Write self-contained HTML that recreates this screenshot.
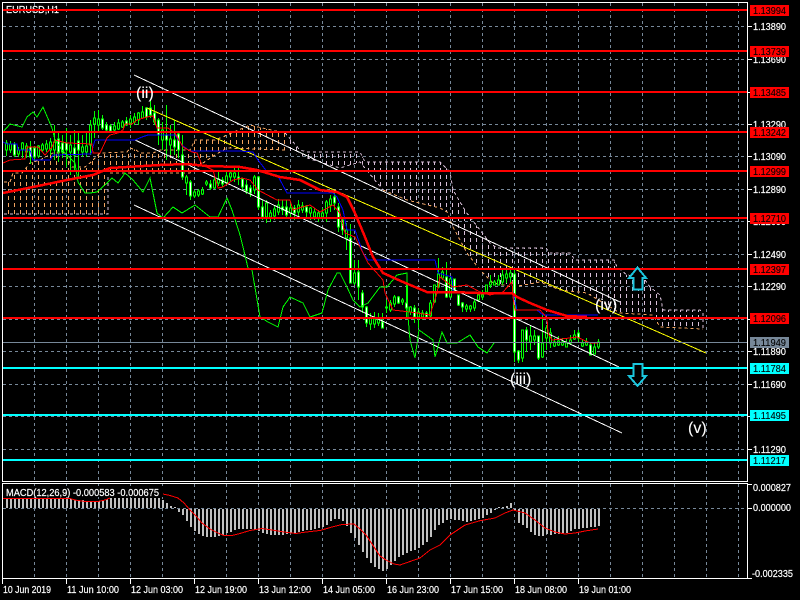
<!DOCTYPE html>
<html><head><meta charset="utf-8"><title>EURUSD,H1</title>
<style>
html,body{margin:0;padding:0;background:#000;width:800px;height:600px;overflow:hidden}
svg{display:block}
text{font-family:"Liberation Sans",sans-serif;font-size:10.5px;fill:#fff;stroke:#fff;stroke-width:.2}
.big{font-size:16px;stroke-width:.1}
.k{fill:#000;stroke:#000;stroke-width:.1}
</style></head><body>
<svg width="800" height="600" viewBox="0 0 800 600" xmlns="http://www.w3.org/2000/svg">
<defs>
<pattern id="o" width="6" height="7" patternUnits="userSpaceOnUse" x="2" y="0"><rect width="1" height="4" fill="#F4A460"/></pattern>
<pattern id="t" width="6" height="7" patternUnits="userSpaceOnUse" x="2" y="0"><rect width="1" height="4" fill="#D8BFD8"/></pattern>
</defs>
<rect width="800" height="600" fill="#000"/>
<g shape-rendering="crispEdges" fill="none">
<!-- grid -->
<path stroke="#778899" stroke-dasharray="3 3" d="M34.5 3V481M66.5 3V481M98.5 3V481M130.5 3V481M162.5 3V481M194.5 3V481M226.5 3V481M258.5 3V481M290.5 3V481M322.5 3V481M354.5 3V481M386.5 3V481M418.5 3V481M450.5 3V481M482.5 3V481M514.5 3V481M546.5 3V481M578.5 3V481M610.5 3V481M642.5 3V481M674.5 3V481M706.5 3V481M738.5 3V481
M3 26.5H747M3 59.5H747M3 92.5H747M3 124.5H747M3 156.5H747M3 189.5H747M3 221.5H747M3 254.5H747M3 286.5H747M3 319.5H747M3 351.5H747M3 384.5H747M3 416.5H747M3 449.5H747
M34.5 484V578M66.5 484V578M98.5 484V578M130.5 484V578M162.5 484V578M194.5 484V578M226.5 484V578M258.5 484V578M290.5 484V578M322.5 484V578M354.5 484V578M386.5 484V578M418.5 484V578M450.5 484V578M482.5 484V578M514.5 484V578M546.5 484V578M578.5 484V578M610.5 484V578M642.5 484V578M674.5 484V578M706.5 484V578M738.5 484V578M3 508.5H747"/>
<!-- cloud -->
<path fill="url(#o)" d="M4 182L10 182 13 173 22 173 30 163 40 160 53 153 65 153 72 167 85 167 90 163 100 153 127 152 130 148 136 150 140 153 153 153 160 150 190 150 195 140 215 140 227 135 250 125 258 127 285 133 300 153 285 150 258 150 227 148 215 155 200 165 190 172 110 173 108 214 4 214z"/>
<path fill="url(#t)" d="M285 133L300 150 307 152 360 152 365 162 440 162 450 172 453 190 466 212 480 230 490 243 497 248 546 248 550 253 570 253 575 260 614 260 617 267 627 275 643 277 650 287 660 295 663 310 700 310 703 313 703 329 660 327 653 315 620 313 587 293 560 290 540 282 513 287 493 283 480 270 467 253 453 227 447 212 440 208 407 200 383 190 360 162 340 168 307 158 285 150z"/>
<path stroke="#F4A460" stroke-dasharray="3 3" d="M4 182L10 182 13 173 22 173 30 163 40 160 53 153 65 153 72 167 85 167 90 163 100 153 127 152 130 148 136 150 140 153 153 153 160 150 190 150 195 140 215 140 227 135 250 125 258 127 285 133M110 173H190L200 165 215 155 227 148 285 150M383 190L407 200 440 208 447 212 453 227 467 253 480 270 493 283 513 287 540 282 560 290 587 293 620 313 653 315 660 327 703 329"/>
<path stroke="#D8BFD8" stroke-dasharray="3 3" d="M4 214H108V175M285 133L300 150 307 152 360 152 365 162 440 162 450 172 453 190 466 212 480 230 490 243 497 248 546 248 550 253 570 253 575 260 614 260 617 267 627 275 643 277 650 287 660 295 663 310 700 310 703 313V329M307 158L340 168 360 162 383 190"/>
<!-- wicks -->
<path stroke="#00FF00" d="M6.5 140V156M10.5 141V153M14.5 142V157M18.5 147V157M22.5 142V158M26.5 143V158M30.5 141V164M34.5 146V160M38.5 145V158M42.5 143V152M46.5 140V152M50.5 138V155M54.5 125V160M58.5 133V162M62.5 135V158M66.5 128V167M70.5 135V175M74.5 130V172M78.5 133V178M82.5 135V157M86.5 133V157M90.5 120V155M94.5 111V138M98.5 110V132M102.5 115V130M106.5 122V132M110.5 124V132M114.5 122V131M118.5 119V130M122.5 120V128M126.5 117V126M130.5 115V128M134.5 113V125M138.5 112V125M142.5 106V118M146.5 107V120M150.5 100V118M154.5 105V125M158.5 118V145M162.5 122V150M166.5 105V160M170.5 125V155M174.5 120V155M178.5 133V158M182.5 135V180M186.5 175V195M190.5 180V200M194.5 190V198M198.5 189V197M202.5 187V195M206.5 180V186M210.5 180V190M214.5 177V189M218.5 172V186M222.5 177V187M226.5 172V185M230.5 172V181M234.5 168V182M238.5 168V185M242.5 178V190M246.5 180V194M250.5 185V197M254.5 175V194M258.5 176V210M262.5 200V220M266.5 200V223M270.5 210V222M274.5 205V220M278.5 199V215M282.5 200V215M286.5 200V218M290.5 203V218M294.5 205V220M298.5 200V217M302.5 202V213M306.5 205V218M310.5 207V220M314.5 208V220M318.5 210V222M322.5 208V220M326.5 200V222M330.5 195V212M334.5 193V210M338.5 203V232M342.5 218V235M346.5 223V250M350.5 224V283M354.5 260V285M358.5 260V300M362.5 290V313M366.5 306V327M370.5 313V330M374.5 312V328M378.5 313V326M382.5 313V328M386.5 300V313M390.5 300V312M394.5 295V307M398.5 296V304M402.5 298V305M406.5 282V317M410.5 306V315M414.5 305V323M418.5 308V328M422.5 310V320M426.5 311V318M430.5 300V317M434.5 285V303M438.5 258V288M442.5 267V280M446.5 262V298M450.5 277V298M454.5 279V292M458.5 295V306M462.5 302V312M466.5 304V312M470.5 305V312M474.5 300V311M478.5 293V302M482.5 290V300M486.5 285V292M490.5 275V288M494.5 280V285M498.5 275V285M502.5 270V285M506.5 268V283M510.5 268V283M514.5 268V362M518.5 350V363M522.5 330V362M526.5 327V352M530.5 326V350M534.5 330V345M538.5 336V360M542.5 315V358M546.5 325V350M550.5 328V348M554.5 338V347M558.5 336V346M562.5 338V346M566.5 338V347M570.5 335V345M574.5 330V340M578.5 330V343M582.5 340V347M586.5 338V346M590.5 342V355M594.5 342V354M598.5 339V349"/>
<!-- bull bodies -->
<path stroke="#00FF00" fill="#000" d="M5.5 143h2v7h-2zM9.5 144h2v6h-2zM17.5 150h2v4h-2zM21.5 143h2v6h-2zM25.5 146h2v6h-2zM37.5 146h2v10h-2zM41.5 145h2v5h-2zM45.5 144h2v5h-2zM49.5 142h2v8h-2zM53.5 142h2v8h-2zM69.5 145h2v7h-2zM81.5 147h2v5h-2zM85.5 146h2v6h-2zM89.5 125h2v20h-2zM93.5 118h2v6h-2zM97.5 119h2v6h-2zM113.5 126h2v4h-2zM117.5 123h2v6h-2zM121.5 122h2v5h-2zM129.5 119h2v4h-2zM133.5 117h2v5h-2zM137.5 113h2v7h-2zM141.5 112h2v6h-2zM161.5 130h2v10h-2zM169.5 139h2v6h-2zM185.5 177h2v6h-2zM193.5 192h2v4h-2zM197.5 191h2v4h-2zM201.5 190h2v4h-2zM205.5 182h2v2h-2zM213.5 180h2v8h-2zM217.5 179h2v4h-2zM225.5 176h2v7h-2zM229.5 173h2v4h-2zM233.5 173h2v4h-2zM253.5 177h2v13h-2zM265.5 203h2v14h-2zM269.5 213h2v4h-2zM273.5 209h2v7h-2zM277.5 205h2v7h-2zM289.5 208h2v5h-2zM297.5 205h2v7h-2zM301.5 206h2v4h-2zM309.5 208h2v5h-2zM313.5 212h2v5h-2zM317.5 213h2v5h-2zM321.5 213h2v4h-2zM325.5 202h2v11h-2zM329.5 199h2v6h-2zM345.5 230h2v8h-2zM353.5 273h2v10h-2zM369.5 318h2v6h-2zM373.5 319h2v5h-2zM377.5 318h2v5h-2zM385.5 307h2v1h-2zM389.5 303h2v7h-2zM393.5 297h2v7h-2zM401.5 300h2v2h-2zM409.5 307h2v5h-2zM417.5 312h2v5h-2zM421.5 313h2v4h-2zM429.5 303h2v13h-2zM433.5 285h2v17h-2zM437.5 274h2v13h-2zM441.5 272h2v6h-2zM449.5 279h2v18h-2zM465.5 306h2v3h-2zM469.5 306h2v3h-2zM473.5 302h2v6h-2zM477.5 295h2v5h-2zM481.5 295h2v2h-2zM485.5 285h2v7h-2zM489.5 282h2v3h-2zM493.5 282h2v3h-2zM497.5 280h2v5h-2zM501.5 275h2v7h-2zM505.5 274h2v4h-2zM509.5 273h2v4h-2zM521.5 330h2v28h-2zM529.5 336h2v6h-2zM533.5 336h2v4h-2zM541.5 343h2v14h-2zM545.5 328h2v10h-2zM549.5 333h2v10h-2zM553.5 342h2v4h-2zM557.5 341h2v4h-2zM561.5 342h2v3h-2zM565.5 343h2v4h-2zM569.5 340h2v3h-2zM573.5 335h2v4h-2zM581.5 343h2v3h-2zM585.5 342h2v3h-2zM593.5 347h2v7h-2zM597.5 342h2v5h-2z"/>
<!-- bear bodies -->
<path stroke="#00FF00" fill="#fff" d="M13.5 144h2v11h-2zM29.5 147h2v10h-2zM33.5 148h2v9h-2zM57.5 139h2v13h-2zM61.5 143h2v9h-2zM65.5 143h2v7h-2zM73.5 148h2v7h-2zM77.5 141h2v9h-2zM101.5 119h2v9h-2zM105.5 125h2v5h-2zM109.5 126h2v5h-2zM125.5 121h2v4h-2zM145.5 108h2v9h-2zM149.5 108h2v7h-2zM153.5 113h2v9h-2zM157.5 120h2v15h-2zM165.5 135h2v5h-2zM173.5 140h2v7h-2zM177.5 134h2v16h-2zM181.5 155h2v22h-2zM189.5 182h2v14h-2zM209.5 184h2v4h-2zM221.5 180h2v4h-2zM237.5 177h2v2h-2zM241.5 179h2v8h-2zM245.5 185h2v6h-2zM249.5 188h2v5h-2zM257.5 177h2v30h-2zM261.5 207h2v10h-2zM281.5 207h2v3h-2zM285.5 207h2v8h-2zM293.5 208h2v5h-2zM305.5 207h2v5h-2zM333.5 197h2v6h-2zM337.5 207h2v20h-2zM341.5 220h2v10h-2zM349.5 238h2v45h-2zM357.5 272h2v15h-2zM361.5 293h2v14h-2zM365.5 307h2v16h-2zM381.5 322h2v6h-2zM397.5 297h2v6h-2zM405.5 303h2v5h-2zM413.5 308h2v9h-2zM425.5 313h2v4h-2zM445.5 277h2v20h-2zM453.5 279h2v11h-2zM457.5 295h2v10h-2zM461.5 303h2v4h-2zM513.5 274h2v78h-2zM517.5 351h2v9h-2zM525.5 330h2v10h-2zM537.5 336h2v22h-2zM577.5 333h2v5h-2zM589.5 345h2v10h-2z"/>
<!-- channels -->
<path stroke="#fff" d="M134 75L620 302M135 140L619 367M134 205L622 433"/>
<path stroke="#FFFF00" d="M147 108L706 353"/>
<!-- blue kijun -->
<path stroke="#0000FF" stroke-width="1" d="M3 142L7 144H17L18 150H30L33 160H50L53 155L91 154L95 140H135L142 137L148 135H175L183 146L190 151H240L253 152L258 160L268 173L278 176L287 193H333L337 197L343 210L347 230H355L363 253L368 260H435L438 273L452 277L453 293H510L513 292L517 310H537L543 315H598"/>
<!-- thin red tenkan -->
<path stroke="#FF0000" d="M3 163L10 160 25 159 27 147H38L45 155 52 147 55 140 67 143 92 144 93 153 100 153 107 138 110 135 118 133 123 130 125 124H132L137 120 147 117 153 116 157 128H168L175 133 183 147 192 152 197 153 202 165 213 170 218 188 223 187 233 180 242 178 250 180 258 190 277 200H290L293 210 302 207 310 205 320 212 333 205 340 213 345 233 355 237 360 247 368 263 383 280 385 293 393 310 410 312 430 315 437 293 440 277 453 287 467 285 480 292 490 295 503 292 512 282 513 297 515 310H540L547 318 548 333 552 340 570 338 577 337 590 343H598"/>
<!-- green chikou -->
<path stroke="#00FF00" d="M3 132L10 124 22 127 27 117 33 112 37 117 43 107 52 128 55 140 62 150 75 163 78 182 85 193H90L97 192 107 183 112 178 118 183 125 173 133 180 143 192 150 178 157 213 163 218 173 207 182 213 195 205 210 217H218L227 198 232 210 240 235 243 247 248 268 252 270 260 317 268 322 278 327 283 307 290 297 303 303 310 317 322 313 328 290 337 273H340L347 287 353 300 360 307 368 303 380 287 387 287 397 275 407 273 408 317 410 340 415 358 419 330 433 340 435 357 442 332 447 343H457L470 335 478 347 487 353 494 343"/>
<!-- thick red MA -->
<path stroke="#FF0000" stroke-width="2.5" d="M3 193L33 187 67 180 93 175 110 168 160 165 187 164 207 166 240 167 257 170 280 177 300 180 320 190 337 192 347 197 355 213 365 237 373 257 383 273 403 282 427 292H453L477 293 512 293 517 297 530 303 547 310 567 316 587 317"/>
</g>
<text x="6" y="13" textLength="53" lengthAdjust="spacingAndGlyphs">EURUSD,H1</text>
<g shape-rendering="crispEdges" fill="none">
<!-- horizontal levels -->
<path stroke="#FF0000" stroke-width="2" d="M3 10H747M3 51H747M3 92H747M3 132H747M3 171H747M3 218H747M3 269H747M3 318H747"/>
<path stroke="#00FFFF" stroke-width="2" d="M3 368H747M3 415H747M3 460H747"/>
<path stroke="#778899" d="M3 342.5H747"/>
<!-- arrows -->
<path stroke="#1BC5DC" stroke-width="2" fill="#000" d="M637.5 267.5L646 278H642.5V289.5H633.5V278H629z"/>
<path stroke="#1BC5DC" stroke-width="2" fill="#000" d="M633.5 364V376H629L637.5 386L646 376H642.5V364z"/>
<!-- MACD histogram -->
<rect x="3" y="486" width="160" height="11" fill="#000"/>
<path transform="translate(.5 0)" stroke="#C0C0C0" stroke-width="2" d="M6.5 508V499M10.5 508V499M14.5 508V499M18.5 508V499M22.5 508V499M26.5 508V499M30.5 508V499M34.5 508V499M38.5 508V499M42.5 508V498M46.5 508V498M50.5 508V498M54.5 508V499M58.5 508V499M62.5 508V499M66.5 508V499M70.5 508V499M74.5 508V500M78.5 508V500M82.5 508V500M86.5 508V501M90.5 508V501M94.5 508V501M98.5 508V501M102.5 508V500M106.5 508V499M110.5 508V498M114.5 508V498M118.5 508V498M122.5 508V498M126.5 508V498M130.5 508V498M134.5 508V498M138.5 508V498M142.5 508V498M146.5 508V498M150.5 508V498M154.5 508V498M158.5 508V498M162.5 508V500M166.5 508V503M170.5 508V506M174.5 508V507
M178.5 509V512M182.5 509V515M186.5 509V521M190.5 509V527M194.5 509V531M198.5 509V534M202.5 509V536M206.5 509V537M210.5 509V537M214.5 509V537M218.5 509V536M222.5 509V535M226.5 509V533M230.5 509V532M234.5 509V530M238.5 509V529M242.5 509V529M246.5 509V529M250.5 509V529M254.5 509V530M258.5 509V531M262.5 509V533M266.5 509V534M270.5 509V535M274.5 509V535M278.5 509V535M282.5 509V535M286.5 509V534M290.5 509V533M294.5 509V533M298.5 509V532M302.5 509V531M306.5 509V530M310.5 509V530M314.5 509V529M318.5 509V528M322.5 509V527M326.5 509V525M330.5 509V521M334.5 509V519M338.5 509V519M342.5 509V521M346.5 509V526M350.5 509V533M354.5 509V538M358.5 509V545M362.5 509V552M366.5 509V558M370.5 509V563M374.5 509V567M378.5 509V569M382.5 509V571M386.5 509V569M390.5 509V565M394.5 509V561M398.5 509V557M402.5 509V555M406.5 509V553M410.5 509V551M414.5 509V550M418.5 509V548M422.5 509V545M426.5 509V542M430.5 509V537M434.5 509V530M438.5 509V525M442.5 509V523M446.5 509V520M450.5 509V519M454.5 509V520M458.5 509V520M462.5 509V521M466.5 509V522M470.5 509V521M474.5 509V520M478.5 509V519M482.5 509V518M486.5 509V515M490.5 509V513M494.5 509V510M498.5 508V507M502.5 508V507M506.5 508V506M510.5 508V503M514.5 509V510M518.5 509V523M522.5 509V525M526.5 509V528M530.5 509V532M534.5 509V535M538.5 509V536M542.5 509V536M546.5 509V534M550.5 509V535M554.5 509V534M558.5 509V534M562.5 509V534M566.5 509V533M570.5 509V531M574.5 509V529M578.5 509V529M582.5 509V528M586.5 509V528M590.5 509V527M594.5 509V527M598.5 509V526"/>
<path stroke="#FF0000" d="M3 498.5H70L75 500 85 501.5H98L105 500 110 498M163 494L170 495.5 178 498 184 503 190 510 196 516 202 523 210 529 218 533 224 535.5H232L240 533.5 250 530.5 262 528.5 272 530 284 532 296 533.5 306 532 320 530.5 332 527 342 524.5 354 524 360 529 366 535 372 544 380 556 386 560 394 564 400 565 420 558 430 550 440 545 450 535 465 525 480 520.7 495 518 505 513 513 510 525 513 535 520 545 528 555 532 565 534 575 533 585 531 598 529"/>
<!-- frames & ticks -->
<path stroke="#fff" d="M2.5 2.5H747.5V481.5H2.5zM2.5 483.5H747.5V578.5H2.5z"/>
<path stroke="#fff" d="M747 26.5H752M747 59.5H752M747 92.5H752M747 124.5H752M747 156.5H752M747 189.5H752M747 221.5H752M747 254.5H752M747 286.5H752M747 319.5H752M747 351.5H752M747 384.5H752M747 416.5H752M747 449.5H752M747 484.5H752M747 508.5H752M747 578.5H752M2.5 579V584M66.5 579V584M130.5 579V584M194.5 579V584M258.5 579V584M322.5 579V584M386.5 579V584M450.5 579V584M514.5 579V584M578.5 579V584"/>
</g>
<!-- wave labels -->
<text class="big" x="136" y="98">(ii)</text>
<text class="big" x="510" y="384">(iii)</text>
<text class="big" x="595" y="310">(iv)</text>
<text class="big" x="688" y="433">(v)</text>
<!-- price axis -->
<g>
<text x="753" y="30" textLength="33" lengthAdjust="spacingAndGlyphs">1.13890</text>
<text x="753" y="63" textLength="33" lengthAdjust="spacingAndGlyphs">1.13690</text>
<text x="753" y="128" textLength="33" lengthAdjust="spacingAndGlyphs">1.13290</text>
<text x="753" y="160" textLength="33" lengthAdjust="spacingAndGlyphs">1.13090</text>
<text x="753" y="193" textLength="33" lengthAdjust="spacingAndGlyphs">1.12890</text>
<text x="753" y="225" textLength="33" lengthAdjust="spacingAndGlyphs">1.12690</text>
<text x="753" y="258" textLength="33" lengthAdjust="spacingAndGlyphs">1.12490</text>
<text x="753" y="290" textLength="33" lengthAdjust="spacingAndGlyphs">1.12290</text>
<text x="753" y="355" textLength="33" lengthAdjust="spacingAndGlyphs">1.11890</text>
<text x="753" y="388" textLength="33" lengthAdjust="spacingAndGlyphs">1.11690</text>
<text x="753" y="453" textLength="33" lengthAdjust="spacingAndGlyphs">1.11290</text>
</g>
<g shape-rendering="crispEdges">
<rect x="750" y="5" width="39" height="11" fill="#FF0000"/>
<rect x="750" y="46" width="39" height="11" fill="#FF0000"/>
<rect x="750" y="87" width="39" height="11" fill="#FF0000"/>
<rect x="750" y="127" width="39" height="11" fill="#FF0000"/>
<rect x="750" y="166" width="39" height="11" fill="#FF0000"/>
<rect x="750" y="213" width="39" height="11" fill="#FF0000"/>
<rect x="750" y="264" width="39" height="11" fill="#FF0000"/>
<rect x="750" y="313" width="39" height="11" fill="#FF0000"/>
<rect x="750" y="337" width="39" height="11" fill="#778899"/>
<rect x="750" y="363" width="39" height="11" fill="#00FFFF"/>
<rect x="750" y="410" width="39" height="11" fill="#00FFFF"/>
<rect x="750" y="455" width="39" height="11" fill="#00FFFF"/>
</g>
<g>
<text class="k" x="753" y="14" textLength="33" lengthAdjust="spacingAndGlyphs">1.13994</text>
<text class="k" x="753" y="55" textLength="33" lengthAdjust="spacingAndGlyphs">1.13739</text>
<text class="k" x="753" y="96" textLength="33" lengthAdjust="spacingAndGlyphs">1.13485</text>
<text class="k" x="753" y="136" textLength="33" lengthAdjust="spacingAndGlyphs">1.13242</text>
<text class="k" x="753" y="175" textLength="33" lengthAdjust="spacingAndGlyphs">1.12999</text>
<text class="k" x="753" y="222" textLength="33" lengthAdjust="spacingAndGlyphs">1.12710</text>
<text class="k" x="753" y="273" textLength="33" lengthAdjust="spacingAndGlyphs">1.12397</text>
<text class="k" x="753" y="322" textLength="33" lengthAdjust="spacingAndGlyphs">1.12096</text>
<text class="k" x="753" y="346" textLength="33" lengthAdjust="spacingAndGlyphs">1.11949</text>
<text class="k" x="753" y="372" textLength="33" lengthAdjust="spacingAndGlyphs">1.11784</text>
<text class="k" x="753" y="419" textLength="33" lengthAdjust="spacingAndGlyphs">1.11495</text>
<text class="k" x="753" y="464" textLength="33" lengthAdjust="spacingAndGlyphs">1.11217</text>
</g>
<!-- MACD labels -->
<text x="6" y="496" textLength="153" lengthAdjust="spacingAndGlyphs">MACD(12,26,9) -0.000583 -0.000675</text>
<text x="753" y="491" textLength="38" lengthAdjust="spacingAndGlyphs">0.000827</text>
<text x="753" y="511" textLength="38" lengthAdjust="spacingAndGlyphs">0.000000</text>
<text x="752" y="577" textLength="41" lengthAdjust="spacingAndGlyphs">-0.002335</text>
<!-- time axis -->
<text x="3" y="593" textLength="48" lengthAdjust="spacingAndGlyphs">10 Jun 2019</text>
<text x="67" y="593" textLength="52" lengthAdjust="spacingAndGlyphs">11 Jun 10:00</text>
<text x="131" y="593" textLength="52" lengthAdjust="spacingAndGlyphs">12 Jun 03:00</text>
<text x="195" y="593" textLength="52" lengthAdjust="spacingAndGlyphs">12 Jun 19:00</text>
<text x="259" y="593" textLength="52" lengthAdjust="spacingAndGlyphs">13 Jun 12:00</text>
<text x="323" y="593" textLength="52" lengthAdjust="spacingAndGlyphs">14 Jun 05:00</text>
<text x="387" y="593" textLength="52" lengthAdjust="spacingAndGlyphs">16 Jun 23:00</text>
<text x="451" y="593" textLength="52" lengthAdjust="spacingAndGlyphs">17 Jun 15:00</text>
<text x="515" y="593" textLength="52" lengthAdjust="spacingAndGlyphs">18 Jun 08:00</text>
<text x="579" y="593" textLength="52" lengthAdjust="spacingAndGlyphs">19 Jun 01:00</text>
</svg>
</body></html>
